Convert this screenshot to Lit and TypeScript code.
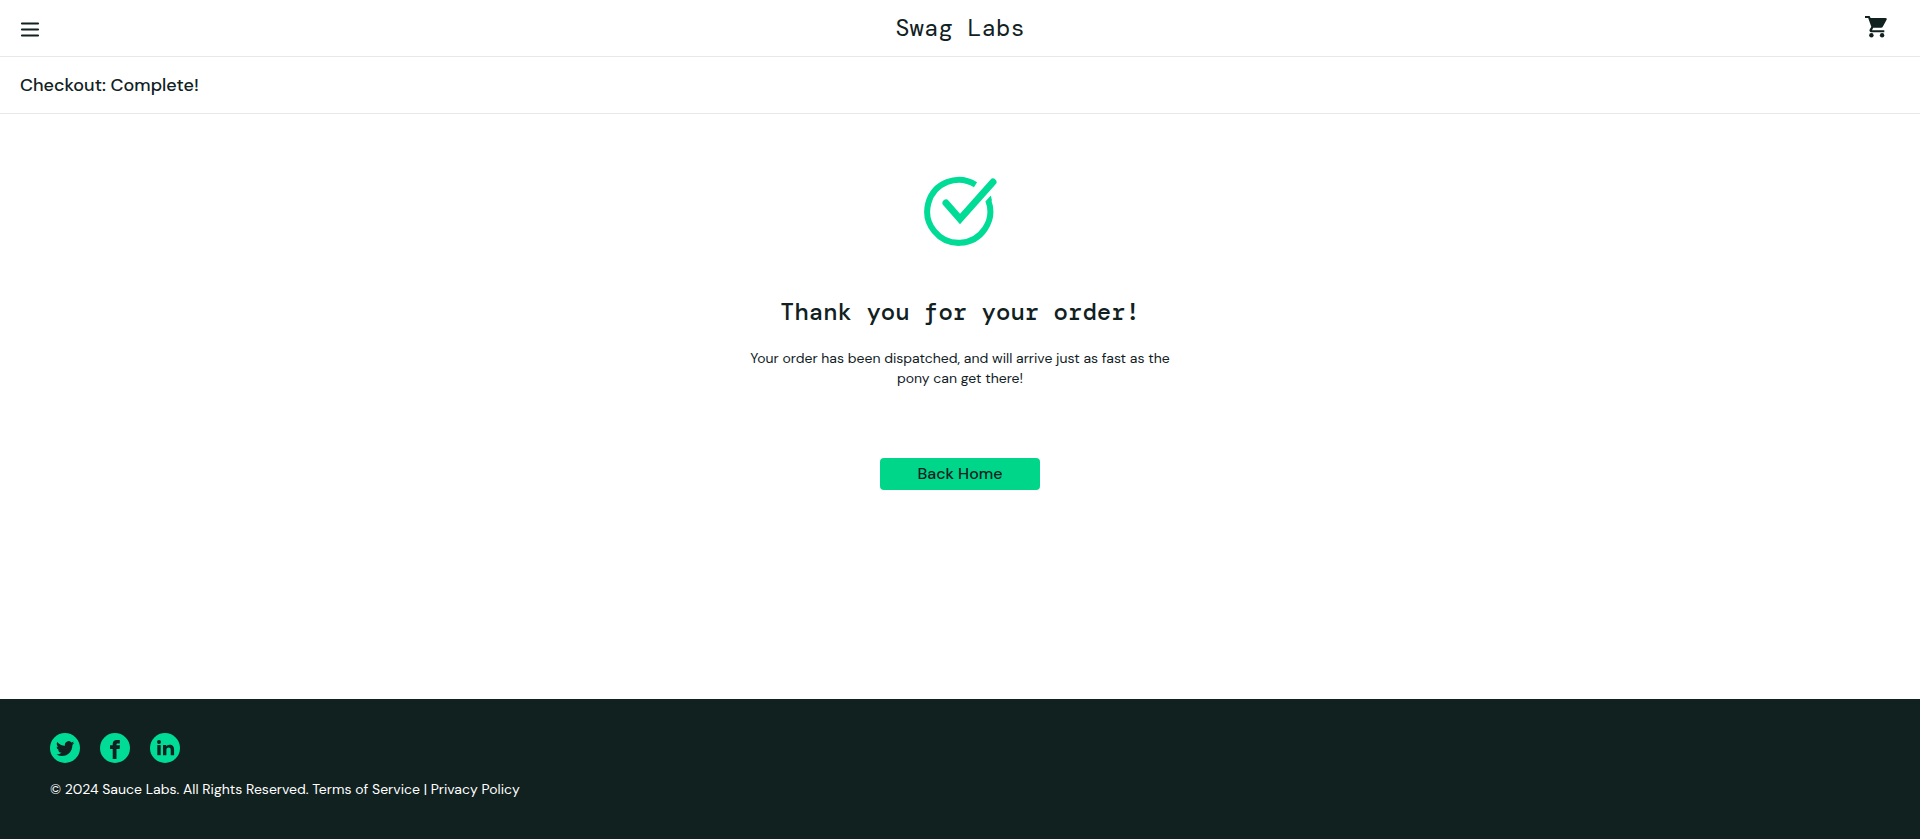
import { LitElement, html, css } from "lit";
import { customElement } from "lit/decorators.js";

@customElement("app-root")
export class AppRoot extends LitElement {
  static styles = css`
    :host {
      display: flex;
      flex-direction: column;
      min-height: 100vh;
      background: #fff;
      color: #11211f;
      font-family: "DM Sans", Inter, Roboto, sans-serif;
      font-size: 14px;
      line-height: 20px;
    }
    * { box-sizing: border-box; }
    svg { display: block; }
    .bar {
      display: grid;
      grid-template-columns: 1fr auto 1fr;
      align-items: center;
      height: 57px;
      padding: 0 20px;
      border-bottom: 1px solid #e8e8e8;
    }
    .brand {
      font-family: "DM Mono", "Liberation Mono", monospace;
      font-size: 24px;
      line-height: 32px;
    }
    .icon-button {
      padding: 0;
      border: 0;
      background: none;
      color: inherit;
      cursor: pointer;
      justify-self: start;
    }
    .cart {
      justify-self: end;
      color: inherit;
      padding: 0 10px 2px 0;
    }
    .subheader {
      display: flex;
      align-items: center;
      height: 57px;
      padding: 0 20px;
      border-bottom: 1px solid #e8e8e8;
    }
    .title {
      font-size: 18px;
      font-weight: 500;
      line-height: 24px;
    }
    main {
      flex: 1;
      display: flex;
      flex-direction: column;
      align-items: center;
      padding: 60px 20px;
      text-align: center;
    }
    h2 {
      margin: 48px 0 0;
      font-family: "DM Mono", "DejaVu Sans Mono", monospace;
      font-size: 24px;
      font-weight: 500;
      line-height: 32px;
    }
    .message {
      max-width: 440px;
      margin: 20px 0 0;
    }
    .home {
      width: 160px;
      height: 32px;
      margin-top: 70px;
      padding: 0;
      border: 0;
      border-radius: 4px;
      background: #00d68a;
      color: inherit;
      font: 500 16px/20px "DM Sans", Inter, sans-serif;
      cursor: pointer;
    }
    footer {
      padding: 34px 50px 40px;
      background: #11211f;
      color: #fff;
    }
    .social {
      display: flex;
      gap: 20px;
      margin: 0 0 16px;
      padding: 0;
      list-style: none;
    }
    .social a { display: block; color: #00dc96; }
    .copy { margin: 0; }
  `;

  render() {
    return html`
      <header>
        <div class="bar">
          <button class="icon-button" aria-label="Open Menu">
            <svg width="20" height="20" viewBox="0 0 20 20" fill="none" stroke="currentColor" stroke-width="2.2" stroke-linecap="round">
              <path d="M2 5.500h16M2 11.500h16M2 17.500h16" />
            </svg>
          </button>
          <div class="brand">Swag Labs</div>
          <a class="cart" href="#cart" aria-label="Shopping cart">
            <svg width="26" height="26" viewBox="0 0 26 26" fill="currentColor">
              <path d="M1 2h4.600l1 1.900H21.500c1.200 0 1.600.9 1.100 1.800L18.900 12.600c-.4.800-1 1.200-1.900 1.200H9.200L8 16.300h12.300v2H7.500c-1.700 0-2.500-1.400-1.800-2.700l1.600-2.900L4.200 4H1z" />
              <circle cx="7.400" cy="21.300" r="2.200" />
              <circle cx="18.100" cy="21.300" r="2.200" />
            </svg>
          </a>
        </div>
        <div class="subheader"><span class="title">Checkout: Complete!</span></div>
      </header>
      <main>
        <svg width="74" height="74" viewBox="0 0 74 74" fill="none" stroke="#00dc96" stroke-width="6">
          <path d="M52.500 10.700A31.500 31.500 0 1 0 65.300 26.500" />
          <path d="M23 29L37 45L70 8" stroke-linecap="round" stroke-width="7" />
          <path d="M62.400 27.500L67.800 21.500L69 26.500L65 28z" fill="#00dc96" stroke="none" />
        </svg>
        <h2>Thank you for your order!</h2>
        <p class="message">Your order has been dispatched, and will arrive just as fast as the pony can get there!</p>
        <button class="home">Back Home</button>
      </main>
      <footer>
        <ul class="social">
          <li>
            <a href="#twitter" aria-label="Twitter">
              <svg width="30" height="30" viewBox="0 0 30 30">
                <circle cx="15" cy="15" r="15" fill="currentColor" />
                <path fill="#11211f" transform="translate(6 6.500) scale(.76)" d="M23.950 4.570a10 10 0 0 1-2.820.77 4.960 4.960 0 0 0 2.160-2.720c-.95.56-2 .96-3.130 1.180a4.920 4.920 0 0 0-8.380 4.480C7.690 8.100 4.070 6.130 1.640 3.160a4.820 4.820 0 0 0-.67 2.480c0 1.710.87 3.210 2.190 4.100a4.900 4.900 0 0 1-2.230-.62v.06a4.920 4.920 0 0 0 3.950 4.830 5 5 0 0 1-2.210.08 4.940 4.940 0 0 0 4.600 3.420A9.870 9.870 0 0 1 0 19.540a14 14 0 0 0 7.550 2.210c9.050 0 14-7.500 14-13.980 0-.21 0-.42-.02-.63a9.940 9.940 0 0 0 2.460-2.550z" />
              </svg>
            </a>
          </li>
          <li>
            <a href="#facebook" aria-label="Facebook">
              <svg width="30" height="30" viewBox="0 0 30 30">
                <circle cx="15" cy="15" r="15" fill="currentColor" />
                <path fill="#11211f" d="M12.700 26V16H10v-3.700h2.700V10.800C12.700 8.300 14.200 7 16.600 7H19.800v3.400h-2c-1 0-1.300.4-1.300 1.100v.8H20l-.4 3.700h-3.100v10z" />
              </svg>
            </a>
          </li>
          <li>
            <a href="#linkedin" aria-label="LinkedIn">
              <svg width="30" height="30" viewBox="0 0 30 30">
                <circle cx="15" cy="15" r="15" fill="currentColor" />
                <g fill="#11211f">
                  <circle cx="9" cy="8.900" r="2" />
                  <rect x="7.300" y="12" width="3.400" height="10.200" />
                  <path d="M13 12h3.200v1.500c.6-1.100 1.800-1.800 3.300-1.800 3.400 0 4.600 2 4.600 5v5.500h-3.400v-5c0-1.400-.4-2.600-2-2.600s-2.300 1.100-2.300 2.600v5H13z" />
                </g>
              </svg>
            </a>
          </li>
        </ul>
        <p class="copy">© 2024 Sauce Labs. All Rights Reserved. Terms of Service | Privacy Policy</p>
      </footer>
    `;
  }
}
